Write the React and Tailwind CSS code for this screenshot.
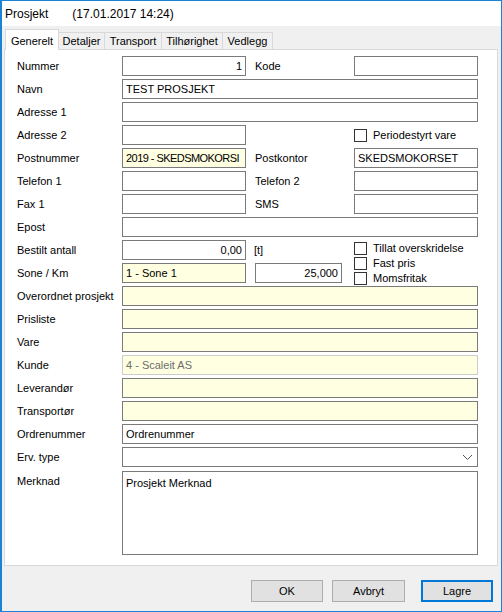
import React from 'react'

const font = { fontFamily: '"Liberation Sans", Arial, sans-serif' }

const tabs = ['Generelt', 'Detaljer', 'Transport', 'Tilhørighet', 'Vedlegg']
const tabWidths = ['w-[54px]', 'w-[46px]', 'w-[57px]', 'w-[61px]', 'w-[50px]']

function Field({ w = 'w-[356px]', value = '', yellow, right, disabled, tight }) {
  return (
    <div
      className={`${w} h-[20px] border ${disabled ? 'border-[#cccccc] text-[#6d6d6d]' : 'border-[#7a7a7a] text-black'} ${yellow ? 'bg-[#ffffe1]' : 'bg-white'} flex items-center ${tight ? 'pl-[3px] pr-0 tracking-[-0.55px]' : 'px-[3px]'} ${right ? 'justify-end' : ''} whitespace-nowrap overflow-hidden`}
    >
      <span>{value}</span>
    </div>
  )
}

function Label({ children, w = 'w-[105px]' }) {
  return <div className={`${w} h-[20px] flex items-center whitespace-nowrap`}>{children}</div>
}

function Row({ children }) {
  return <div className="h-[23px] flex items-start">{children}</div>
}

function Check({ label }) {
  return (
    <div className="flex items-center h-[15px]">
      <div className="w-[13px] h-[13px] border border-[#333333] bg-white" />
      <span className="ml-[6px]">{label}</span>
    </div>
  )
}

export default function App() {
  return (
    <div className="w-[502px] h-[612px] bg-[#f0f0f0] border border-[#1883d7] border-l-2 flex flex-col text-[11px] text-black overflow-hidden" style={font}>
      {/* Title bar */}
      <div className="h-[25px] bg-white flex items-center px-[3px] text-[12px] shrink-0">
        <span>Prosjekt</span>
        <span className="ml-[24px]">(17.01.2017 14:24)</span>
      </div>

      {/* Tabs */}
      <div className="flex items-end h-[21px] mt-[2px] pl-[3px] relative z-10 shrink-0">
        {tabs.map((t, i) => (
          i === 0 ? (
            <div key={t} className={`${tabWidths[i]} h-[21px] bg-white border border-b-0 border-[#d9d9d9] flex items-start pt-[3px] justify-center -mb-px`}>
              {t}
            </div>
          ) : (
            <div key={t} className={`${tabWidths[i]} h-[17px] bg-[#f0f0f0] border border-l-0 border-b-0 border-[#d9d9d9] flex items-center justify-center`}>
              {t}
            </div>
          )
        ))}
      </div>

      {/* Panel */}
      <div className="ml-[2px] w-[494px] h-[517px] bg-white border border-[#d9d9d9] pl-[12px] pt-[6px] shrink-0">
        <Row>
          <Label>Nummer</Label>
          <Field w="w-[124px]" value="1" right />
          <Label w="w-[108px] pl-[9px]">Kode</Label>
          <Field w="w-[124px]" />
        </Row>
        <Row>
          <Label>Navn</Label>
          <Field value="TEST PROSJEKT" />
        </Row>
        <Row>
          <Label>Adresse 1</Label>
          <Field />
        </Row>
        <Row>
          <Label>Adresse 2</Label>
          <Field w="w-[124px]" />
          <div className="ml-[108px] h-[20px] flex items-center">
            <Check label="Periodestyrt vare" />
          </div>
        </Row>
        <Row>
          <Label>Postnummer</Label>
          <Field w="w-[124px]" value="2019 - SKEDSMOKORSI" yellow tight />
          <Label w="w-[108px] pl-[9px]">Postkontor</Label>
          <Field w="w-[124px]" value="SKEDSMOKORSET" />
        </Row>
        <Row>
          <Label>Telefon 1</Label>
          <Field w="w-[124px]" />
          <Label w="w-[108px] pl-[9px]">Telefon 2</Label>
          <Field w="w-[124px]" />
        </Row>
        <Row>
          <Label>Fax 1</Label>
          <Field w="w-[124px]" />
          <Label w="w-[108px] pl-[9px]">SMS</Label>
          <Field w="w-[124px]" />
        </Row>
        <Row>
          <Label>Epost</Label>
          <Field />
        </Row>

        {/* Bestilt antall + Sone with checkbox column */}
        <div className="flex">
          <div className="w-[337px]">
            <Row>
              <Label>Bestilt antall</Label>
              <Field w="w-[124px]" value="0,00" right />
              <Label w="w-[40px] pl-[8px]">[t]</Label>
            </Row>
            <Row>
              <Label>Sone / Km</Label>
              <Field w="w-[124px]" value="1 - Sone 1" yellow />
              <div className="w-[9px]" />
              <Field w="w-[87px]" value="25,000" right />
            </Row>
          </div>
          <div className="pt-[1px] flex flex-col">
            <Check label="Tillat overskridelse" />
            <Check label="Fast pris" />
            <Check label="Momsfritak" />
          </div>
        </div>

        <Row>
          <Label>Overordnet prosjekt</Label>
          <Field yellow />
        </Row>
        <Row>
          <Label>Prisliste</Label>
          <Field yellow />
        </Row>
        <Row>
          <Label>Vare</Label>
          <Field yellow />
        </Row>
        <Row>
          <Label>Kunde</Label>
          <Field yellow disabled value="4 - Scaleit AS" />
        </Row>
        <Row>
          <Label>Leverandør</Label>
          <Field yellow />
        </Row>
        <Row>
          <Label>Transportør</Label>
          <Field yellow />
        </Row>
        <Row>
          <Label>Ordrenummer</Label>
          <Field value="Ordrenummer" />
        </Row>
        <Row>
          <Label>Erv. type</Label>
          <div className="w-[356px] h-[20px] border border-[#7a7a7a] bg-white flex items-center justify-end pr-[4px]">
            <svg width="11" height="7" viewBox="0 0 11 7">
              <path d="M1 1 L5.5 5.5 L10 1" fill="none" stroke="#555555" strokeWidth="1" />
            </svg>
          </div>
        </Row>
        <div className="flex items-start mt-px">
          <Label>Merknad</Label>
          <div className="w-[356px] h-[84px] border border-[#7a7a7a] bg-white px-[3px] pt-[3px]">Prosjekt Merknad</div>
        </div>
      </div>

      {/* Buttons */}
      <div className="flex mt-[14px] pl-[249px] shrink-0">
        <div className="w-[72px] h-[22px] bg-[#e1e1e1] border border-[#adadad] flex items-center justify-center">OK</div>
        <div className="w-[73px] h-[22px] ml-[9px] bg-[#e1e1e1] border border-[#adadad] flex items-center justify-center">Avbryt</div>
        <div className="w-[72px] h-[22px] ml-[16px] bg-[#e1e1e1] border-2 border-[#0078d7] flex items-center justify-center">Lagre</div>
      </div>
    </div>
  )
}
